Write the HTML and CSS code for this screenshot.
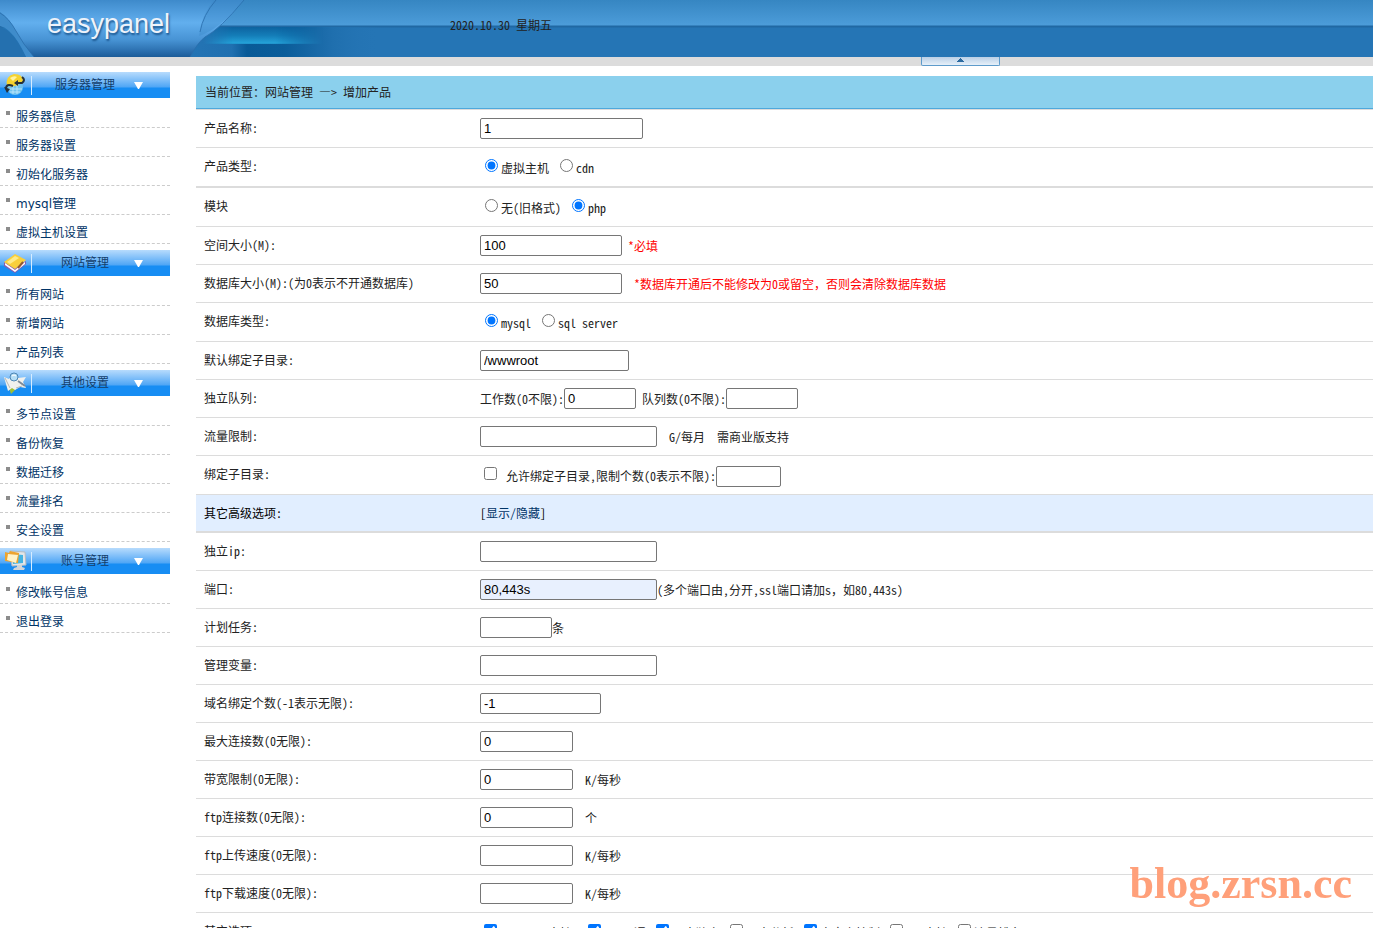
FILE: index.html
```html
<!DOCTYPE html>
<html lang="zh-CN">
<head>
<meta charset="utf-8">
<title>easypanel</title>
<link rel="stylesheet" href="styles.css">
</head>
<body>
<header class="top">
  <div class="brand">
    <svg class="brand-art" width="450" height="57" viewBox="0 0 450 57" aria-hidden="true">
      <defs>
        <linearGradient id="panel" x1="0" y1="0" x2="0" y2="57" gradientUnits="userSpaceOnUse">
          <stop offset="0" stop-color="#3e8acb"/><stop offset=".4" stop-color="#62afee"/><stop offset=".7" stop-color="#4793d4"/><stop offset=".93" stop-color="#2669a8"/><stop offset="1" stop-color="#1c5c98"/>
        </linearGradient>
        <linearGradient id="glow" x1="0" y1="0" x2="0" y2="1">
          <stop offset="0" stop-color="#0d63a0"/><stop offset=".5" stop-color="#147db8"/><stop offset=".95" stop-color="#24a2d9"/><stop offset="1" stop-color="#1c86c0"/>
        </linearGradient>
        <linearGradient id="fade" x1="0" y1="0" x2="1" y2="0">
          <stop offset="0" stop-color="#000"/><stop offset=".25" stop-color="#fff"/><stop offset=".6" stop-color="#fff"/><stop offset="1" stop-color="#000"/>
        </linearGradient>
        <mask id="glow-mask"><rect x="203" y="27" width="120" height="17" fill="url(#fade)"/></mask>
        <linearGradient id="deep" x1="0" y1="0" x2="1" y2="0">
          <stop offset="0" stop-color="#2474b4"/><stop offset=".22" stop-color="#2070b0"/><stop offset=".3" stop-color="#085a97"/><stop offset=".5" stop-color="#0b5d9a"/><stop offset=".75" stop-color="#1f6fae"/><stop offset="1" stop-color="#2575b5" stop-opacity="0"/>
        </linearGradient>
      </defs>
      <rect x="190" y="27" width="190" height="30" fill="url(#deep)"/>
      <rect x="203" y="27" width="120" height="17" fill="url(#glow)" mask="url(#glow-mask)"/>
      <path d="M0 0H244Q220 29 205 37Q198 42 190 57H32Q22 43 14 29Q8 17 0 12Z" fill="url(#panel)"/>
      <path d="M214 0H244Q220 29 199 36Q201 16 214 0Z" fill="#3a86c6" opacity=".35"/>
      <path d="M0 12Q9 18 16 31T34 57H26Q18 39 9 31Q5 27 0 26Z" fill="#3f8ccb"/>
      <path d="M0 27Q11 31 18 43L26 57H0Z" fill="#2470af"/>
      <g fill="none" stroke="#2a6eac" opacity=".8">
        <path d="M0 13Q9 18 16 31T34 57"/>
        <path d="M216 0Q203 15 200 32"/>
        <path d="M244 0Q220 29 205 37Q198 42 190 57"/>
      </g>
    </svg>
    <span class="brand-name">easypanel</span>
  </div>
  <time class="date" datetime="2020-10-30">2020.10.30 星期五</time>
</header>
<div class="strip">
  <button class="collapse" type="button" aria-label="收起顶部">
    <svg width="7" height="4" viewBox="0 0 7 4"><path d="M3 0h1v1h1v1h1v1h1v1H0V3h1V2h1V1h1z" fill="#2d6ba0"/></svg>
  </button>
</div>
<div class="frame">
  <nav class="side">
    <section class="menu">
      <button class="menu-head" type="button">
        <svg class="menu-icon" width="36" height="26" viewBox="0 0 36 26" aria-hidden="true">
          <circle cx="15" cy="15" r="8" fill="#6fc3ef"/><path d="M8 17h14M10 20h10M13 12v10M17 12v10" stroke="#b7e4fa"/>
          <path d="M7 14Q5 4 14 2Q23 2 23 9Q17 16 7 14Z" fill="#f6d330"/><path d="M10 6Q14 3 17 5L13 9Z" fill="#fff3a0"/>
          <path d="M22 5Q26 8 22 11L17 11M13 14Q6 11 6 17" fill="none" stroke="#24303c" stroke-width="2"/>
          <path d="M18 8v6l-4-3zM4 15l6 2-3 4z" fill="#24303c"/>
          <path d="M31.500 4v19" stroke="#d6ecff"/>
        </svg>
        <span>服务器管理</span>
        <svg width="9" height="7" viewBox="0 0 9 7" aria-hidden="true"><path d="M0 0h9L5 7H4z" fill="#fff"/></svg>
      </button>
      <ul>
        <li><a href="#">服务器信息</a></li>
        <li><a href="#">服务器设置</a></li>
        <li><a href="#">初始化服务器</a></li>
        <li><a href="#">mysql管理</a></li>
        <li><a href="#">虚拟主机设置</a></li>
      </ul>
    </section>
    <section class="menu">
      <button class="menu-head" type="button">
        <svg class="menu-icon" width="36" height="26" viewBox="0 0 36 26" aria-hidden="true">
          <path d="M4 12v4l11 7 11-9v-3L15 18z" fill="#8a5bb0"/><path d="M5 13l10 7 10-8v2l-10 8-10-7z" fill="#fff"/>
          <path d="M4 12L15 4l11 6-11 9z" fill="#f9cf3c"/><path d="M7 12l8-6 4 2-9 6z" fill="#ffeb8a"/>
          <path d="M18 18l5-6" stroke="#945a32" stroke-width="2"/>
          <path d="M31.500 4v19" stroke="#d6ecff"/>
        </svg>
        <span>网站管理</span>
        <svg width="9" height="7" viewBox="0 0 9 7" aria-hidden="true"><path d="M0 0h9L5 7H4z" fill="#fff"/></svg>
      </button>
      <ul>
        <li><a href="#">所有网站</a></li>
        <li><a href="#">新增网站</a></li>
        <li><a href="#">产品列表</a></li>
      </ul>
    </section>
    <section class="menu">
      <button class="menu-head" type="button">
        <svg class="menu-icon" width="36" height="26" viewBox="0 0 36 26" aria-hidden="true">
          <path d="M8 15l3 9 5-5 1-3z" fill="#9bbf36"/><path d="M4 7l5 2 4-5 5 4 8-1-3 5 3 6-6-1-5 3-3-2-4 3z" fill="#f1f1ee"/>
          <path d="M5 8l5 10M16 18l6-2" stroke="#b9b9b5"/>
          <circle cx="14" cy="7" r="4" fill="#b5def6" stroke="#4e86b4"/><path d="M12 6q2-2 4 0" fill="none" stroke="#fff"/>
          <path d="M18 11l7 5" stroke="#7c8a99" stroke-width="2"/>
          <path d="M31.500 4v19" stroke="#d6ecff"/>
        </svg>
        <span>其他设置</span>
        <svg width="9" height="7" viewBox="0 0 9 7" aria-hidden="true"><path d="M0 0h9L5 7H4z" fill="#fff"/></svg>
      </button>
      <ul>
        <li><a href="#">多节点设置</a></li>
        <li><a href="#">备份恢复</a></li>
        <li><a href="#">数据迁移</a></li>
        <li><a href="#">流量排名</a></li>
        <li><a href="#">安全设置</a></li>
      </ul>
    </section>
    <section class="menu">
      <button class="menu-head" type="button">
        <svg class="menu-icon" width="36" height="26" viewBox="0 0 36 26" aria-hidden="true">
          <path d="M10 3l15 1 1 13-14 1z" fill="#e3e6e8" stroke="#b4bcc2"/><path d="M12 6l11 1v8l-10 1z" fill="#45b4e2"/>
          <path d="M17 17h5v2l3 1-1 2H13l1-2 3-1z" fill="#d1d5d8"/>
          <path d="M5 4l4 1 1-2 9 2-1 10-13-2z" fill="#eda42f"/><path d="M8 6l10 1-2 8-9-3z" fill="#fff3c9"/>
          <path d="M31.500 4v19" stroke="#d6ecff"/>
        </svg>
        <span>账号管理</span>
        <svg width="9" height="7" viewBox="0 0 9 7" aria-hidden="true"><path d="M0 0h9L5 7H4z" fill="#fff"/></svg>
      </button>
      <ul>
        <li><a href="#">修改帐号信息</a></li>
        <li><a href="#">退出登录</a></li>
      </ul>
    </section>
  </nav>
  <main class="content">
    <h1 class="crumb">当前位置<span class="full">：</span>网站管理 —&gt; 增加产品</h1>
    <form>
      <div class="group">
        <div class="row"><label for="name">产品名称:</label><div class="field"><input class="w163" type="text" id="name" value="1"></div></div>
        <div class="row tall"><span>产品类型:</span><div class="field choices"><label><input type="radio" name="type" checked>虚拟主机</label><label><input type="radio" name="type">cdn</label></div></div>
      </div>
      <div class="group">
        <div class="row tall"><span>模块</span><div class="field choices"><label><input type="radio" name="module">无(旧格式)</label><label><input type="radio" name="module" checked>php</label></div></div>
        <div class="row"><label for="space">空间大小(M):</label><div class="field"><input class="w142" type="text" id="space" value="100"><span class="near warn">*必填</span></div></div>
        <div class="row"><label for="db">数据库大小(M):(为0表示不开通数据库)</label><div class="field"><input class="w142" type="text" id="db" value="50"><span class="unit warn">*数据库开通后不能修改为0或留空<span class="full">，</span>否则会清除数据库数据</span></div></div>
        <div class="row tall"><span>数据库类型:</span><div class="field choices"><label><input type="radio" name="dbtype" checked>mysql</label><label><input type="radio" name="dbtype">sql server</label></div></div>
        <div class="row"><label for="dir">默认绑定子目录:</label><div class="field"><input class="w149" type="text" id="dir" value="/wwwroot"></div></div>
        <div class="row"><span>独立队列:</span><div class="field"><label for="workers">工作数(0不限):</label><input class="w72" type="text" id="workers" value="0"><label class="near" for="queue">队列数(0不限):</label><input class="w72" type="text" id="queue"></div></div>
        <div class="row"><label for="flow">流量限制:</label><div class="field"><input class="w177" type="text" id="flow"><span class="unit">G/每月<span class="full">　</span>需商业版支持</span></div></div>
        <div class="row tall"><span>绑定子目录:</span><div class="field choices"><input type="checkbox" id="subdir"><label class="near" for="subdir">允许绑定子目录,</label><label class="flush" for="subdirs">限制个数(0表示不限):</label><input class="w65" type="text" id="subdirs"></div></div>
        <div class="row advanced"><span>其它高级选项:</span><div class="field">[<a href="#">显示/隐藏</a>]</div></div>
      </div>
      <div class="group">
        <div class="row"><label for="ip">独立ip:</label><div class="field"><input class="w177" type="text" id="ip"></div></div>
        <div class="row"><label for="port">端口:</label><div class="field"><input class="w177 filled" type="text" id="port" value="80,443s"><span>(多个端口由,分开,ssl端口请加s<span class="full">，</span>如80,443s)</span></div></div>
        <div class="row"><label for="cron">计划任务:</label><div class="field"><input class="w72" type="text" id="cron"><span>条</span></div></div>
        <div class="row"><label for="env">管理变量:</label><div class="field"><input class="w177" type="text" id="env"></div></div>
        <div class="row"><label for="domains">域名绑定个数(-1表示无限):</label><div class="field"><input class="w121" type="text" id="domains" value="-1"></div></div>
        <div class="row"><label for="conns">最大连接数(0无限):</label><div class="field"><input class="w93" type="text" id="conns" value="0"></div></div>
        <div class="row"><label for="band">带宽限制(0无限):</label><div class="field"><input class="w93" type="text" id="band" value="0"><span class="unit">K/每秒</span></div></div>
        <div class="row"><label for="ftpc">ftp连接数(0无限):</label><div class="field"><input class="w93" type="text" id="ftpc" value="0"><span class="unit">个</span></div></div>
        <div class="row"><label for="ftpu">ftp上传速度(0无限):</label><div class="field"><input class="w93" type="text" id="ftpu"><span class="unit">K/每秒</span></div></div>
        <div class="row"><label for="ftpd">ftp下载速度(0无限):</label><div class="field"><input class="w93" type="text" id="ftpd"><span class="unit">K/每秒</span></div></div>
        <div class="row tall"><span>其它选项:</span><div class="field choices"><label class="wide"><input type="checkbox" checked>htaccess支持</label><label><input type="checkbox" checked>ftp开通</label><label><input type="checkbox" checked>日志独立</label><label><input type="checkbox">日志分析</label><label><input type="checkbox" checked>自定义控制</label><label><input type="checkbox">ssl支持</label><label><input type="checkbox">流量排名</label></div></div>
      </div>
    </form>
  </main>
</div>
<div class="watermark">blog.zrsn.cc</div>
</body>
</html>
```

FILE: styles.css
```css
* { box-sizing: border-box; }

body {
  display: flex;
  flex-direction: column;
  height: 100vh;
  margin: 0;
  overflow: hidden;
  background: #fff;
  color: #222;
  font: 12px/18px "Noto Sans CJK SC", sans-serif;
  /* half-width Latin, two characters to one ideograph */
  font-feature-settings: "hwid";
}
.full { font-feature-settings: normal; white-space: pre; }

a { color: #036; text-decoration: none; }

/* header */
.top {
  display: flex;
  flex: none;
  height: 57px;
  background: linear-gradient(#3686c2, #4c9cd9 25px, #2068a3 26px, #2068a3 27px, #2575b5 28px);
}
.brand { position: relative; width: 450px; padding-left: 47px; }
.brand-art { position: absolute; top: 0; left: 0; }
.brand-name {
  position: relative;
  color: #eef3fa;
  font: 27px/48px "Liberation Sans", sans-serif;
  text-shadow: 1px 2px 2px #1b568e;
}
.date { padding-top: 16px; }

.strip { flex: none; height: 9px; padding-left: 921px; background: #dcdcdc; }
.collapse {
  display: flex;
  align-items: center;
  justify-content: center;
  width: 79px;
  height: 9px;
  padding: 0 0 2px;
  border: 1px solid #5d9bcb;
  border-top: 0;
  border-radius: 0 0 2px 2px;
  background: linear-gradient(#b9cfe6, #e6f0f9);
}

/* side menu */
.frame { display: flex; flex: 1; min-height: 0; }
.side {
  flex: none;
  width: 170px;
  margin-right: 26px;
  padding-top: 6px;
  font-family: "DejaVu Sans", "Noto Sans CJK SC", sans-serif;
}
.menu { margin-bottom: 6px; }
.menu-head {
  display: grid;
  grid-template-columns: 36px 1fr 36px;
  align-items: center;
  width: 100%;
  height: 26px;
  margin: 0 0 1px;
  padding: 0;
  border: 0;
  background: linear-gradient(#b7dbfd, #4fa6f5 15px, #178df3 16px);
  color: #143e6b;
  font: 12px/18px "Noto Sans CJK SC", sans-serif;
}
.menu-head span { padding-bottom: 2px; }
.menu ul { margin: 0; padding: 0; list-style: none; }
.menu li {
  position: relative;
  height: 29px;
  padding: 9px 0 0 16px;
  border-bottom: 1px dashed #ccc;
  line-height: 19px;
}
.menu li::before {
  position: absolute;
  top: 12px;
  left: 6px;
  width: 4px;
  height: 4px;
  background: #8c8c8c;
  content: "";
}

/* form */
.content { flex: 1; min-width: 0; padding-top: 10px; overflow: auto; scrollbar-width: none; }
.crumb {
  height: 33px;
  margin: 0;
  padding-left: 9px;
  border-bottom: 1px solid #4ea8dc;
  background: #8bd0ed;
  font-size: 12px;
  font-weight: 400;
  line-height: 32px;
}
.group { border-top: 1px solid #dcdcdc; }
.row {
  display: grid;
  grid-template-columns: 276px 1fr;
  align-items: center;
  height: 38px;
  padding-left: 8px;
  border-bottom: 1px solid #dcdcdc;
}
.row > :first-child { padding-bottom: 2px; }
.tall { height: 39px; }
.advanced { height: 37px; background: #e1eeff; color: #000; }
.advanced > :first-child { padding-bottom: 0; }
.field { display: flex; align-items: center; white-space: nowrap; }
.near { margin-left: 6px; }
.unit { margin-left: 12px; }
.warn { color: #f00; }

input { margin: 0; accent-color: #0075ff; }
input[type="text"] {
  height: 21px;
  padding: 1px 3px;
  border: 1px solid #767676;
  border-radius: 2px;
  background: #fff;
  color: #000;
  font: 13px "Liberation Sans", sans-serif;
}
input.filled { background: #e8f0fe; }
input[type="radio"], input[type="checkbox"] { flex: none; width: 13px; height: 13px; margin: 0 3px 5px 5px; }
input[type="checkbox"] { margin-left: 4px; }
.choices { padding-top: 2px; }
.choices label { display: flex; align-items: center; }
.choices label + label { margin-left: 6px; }
.choices .wide { margin-right: 6px; }
.choices label.flush { margin-left: 0; }

.w65 { width: 65px; }
.w72 { width: 72px; }
.w93 { width: 93px; }
.w121 { width: 121px; }
.w142 { width: 142px; }
.w149 { width: 149px; }
.w163 { width: 163px; }
.w177 { width: 177px; }

.watermark {
  position: fixed;
  right: 21px;
  bottom: 22px;
  color: #ffa07a;
  font: bold 44px/44px "Liberation Serif", serif;
}
```
